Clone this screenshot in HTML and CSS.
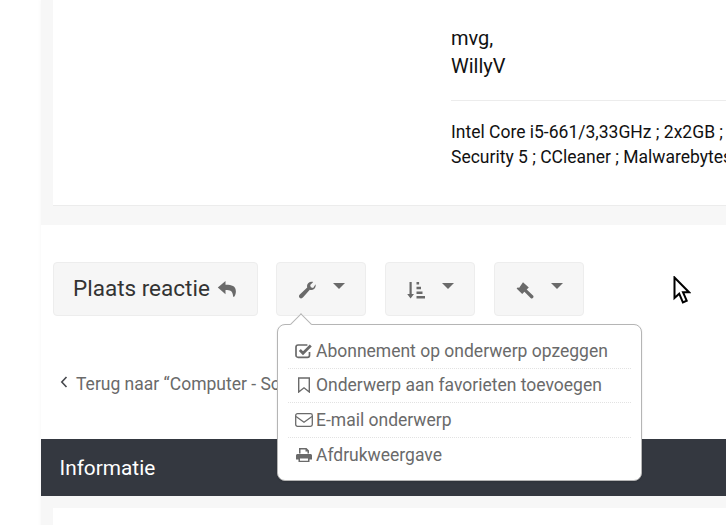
FILE: index.html
```html
<!DOCTYPE html>
<html lang="nl">
<head>
<meta charset="utf-8">
<title>Onderwerp</title>
<link rel="stylesheet" href="styles.css">
</head>
<body>
<div class="wrap">
  <div class="post-area">
    <article class="post">
      <div class="post-side"></div>
      <div class="post-body">
        <p class="closing">mvg,<br>WillyV</p>
        <div class="signature">Intel Core i5-661/3,33GHz ; 2x2GB ; Windows 10 Home 64 bit ; Kaspersky Internet<br>Security 5 ; CCleaner ; Malwarebytes Anti-Malware ; Firefox</div>
      </div>
    </article>
  </div>
  <section class="actions">
    <div class="toolbar">
      <a class="btn btn-reply">Plaats reactie
        <svg class="reply-icon" viewBox="0 0 20 18" width="20" height="18"><path fill="#6a6a6a" d="M8.500 1 .8 7.600l7.700 6.600V10c4.600 0 7.200.8 7.600 6.200.1.600.4.8.8.8.8-.9 2-3 2-5.600C18.900 5.600 14 4.700 8.500 4.800z"/></svg>
      </a>
      <a class="btn btn-tool">
        <svg class="tool-icon" viewBox="0 0 18 18" width="18" height="18"><path fill="#6a6a6a" d="M17.600 3.200c.3 2-.2 3.700-1.500 4.800-1.300 1.100-2.900 1.300-4.300.8L4.900 16.600c-.9 1-2.400 1.100-3.300.2-.9-.9-.8-2.300.2-3.200l7.400-7.100C8.800 5 9.100 3.300 10.400 2.100 11.700.9 13.500.6 15.200 1.100l-3 2.900.6 2.300 2.300.6z"/></svg>
        <span class="caret"></span>
      </a>
      <a class="btn btn-tool">
        <svg class="tool-icon" viewBox="0 0 18 18" width="18" height="18"><path fill="#6a6a6a" d="M2.500 1h2.200v12h2.300L3.600 17.500.2 13h2.300zM9.500 1h2.600v2.400H9.500zM9.500 5.800h4.500v2.400H9.500zM9.500 10.500h6V12.900h-6zM9.500 15h8.500v2.500H9.500z"/></svg>
        <span class="caret"></span>
      </a>
      <a class="btn btn-tool">
        <svg class="tool-icon" viewBox="0 0 18 18" width="18" height="18"><path fill="#6a6a6a" d="M7 1.200 12.800 6.400 10.700 8.600l6.300 6c.7.700.7 1.700 0 2.400-.7.700-1.700.6-2.400-.1L8.400 10.700 6.200 13 .6 7.500 2 6.200l1 .8z"/></svg>
        <span class="caret"></span>
      </a>
    </div>
    <div class="back-row">
      <svg class="back-icon" viewBox="0 0 8 12" width="8" height="12"><path fill="none" stroke="#47494e" stroke-width="1.600" d="M6.500 1 1.800 6l4.700 5"/></svg>
      <a class="back-link">Terug naar “Computer - Software”</a>
    </div>
  </section>
  <section class="info">
    <h3 class="info-title">Informatie</h3>
    <div class="info-gutter"><div class="info-card"></div></div>
  </section>
</div>

<div class="menu">
  <span class="menu-arrow"></span>
  <ul class="menu-list">
    <li class="menu-item">
      <svg class="menu-icon" viewBox="0 0 18 16" width="18" height="16"><path fill="none" stroke="#6a6a6a" stroke-width="1.700" d="M14.500 9v3.200c0 1.300-.9 2.100-2.100 2.100H3.100C1.900 14.300 1 13.500 1 12.200V4.100C1 2.900 1.900 2 3.100 2h9.300"/><path fill="none" stroke="#6a6a6a" stroke-width="2.800" d="M4.800 7 8 10.200 15.800 2.600"/></svg>
      Abonnement op onderwerp opzeggen
    </li>
    <li class="menu-item">
      <svg class="menu-icon" viewBox="0 0 18 16" width="18" height="16"><path fill="none" stroke="#6a6a6a" stroke-width="1.400" d="M3.700 1h10.600v14L9 10.800 3.700 15z"/></svg>
      Onderwerp aan favorieten toevoegen
    </li>
    <li class="menu-item">
      <svg class="menu-icon" viewBox="0 0 18 16" width="18" height="16"><rect x=".7" y="1.700" width="16.600" height="12.600" rx="1.800" fill="none" stroke="#6a6a6a" stroke-width="1.300"/><path fill="none" stroke="#6a6a6a" stroke-width="1.300" d="M1 4.500 9 10.300 17 4.500"/></svg>
      E-mail onderwerp
    </li>
    <li class="menu-item">
      <svg class="menu-icon" viewBox="0 0 18 16" width="18" height="16"><path fill="#6a6a6a" d="M4 1h7.500L14 3.500V6.500h-1.500V4.500H10.500V2.500H5.500v4H4zM2.500 7h13c.8 0 1.500.7 1.500 1.500v4h-2.500v2.500h-11v-2.500H1v-4C1 7.700 1.700 7 2.500 7zM5 11.500v2.300h8V11.500z"/></svg>
      Afdrukweergave
    </li>
  </ul>
</div>

<svg class="cursor" viewBox="0 0 18 30" width="18" height="30"><path fill="#fff" stroke="#000" stroke-width="2" d="M1.500 1.500V22l4.700-4.300 3.700 8.700 3.800-1.700-3.700-8.500h6z"/></svg>
</body>
</html>
```
FILE: styles.css
```css
* { box-sizing: border-box; }
html, body { margin: 0; height: 525px; overflow: hidden; background: #fff; }
body { font-family: Roboto, "Liberation Sans", sans-serif; padding-left: 41px; }
.wrap { width: 1200px; box-shadow: 0 0 5px rgba(0,0,0,.04); }
.post-area { background: #f7f7f7; padding: 0 0 19px 12px; }
.post { display: flex; background: #fff; height: 206px; border-bottom: 1px solid #ececec; }
.post-side { width: 398px; flex: none; }
.post-body { flex: 1; padding-top: 24px; }
.closing { margin: 0; font-size: 20px; line-height: 28px; color: #111; }
.signature { margin-top: 20px; border-top: 1px solid #ececec; padding-top: 19px; font-size: 17.500px; line-height: 25px; color: #111; white-space: nowrap; }
.actions { background: #fff; height: 214px; padding: 37px 12px 0; }
.toolbar { display: flex; gap: 18px; height: 54px; }
.btn { display: flex; align-items: center; height: 54px; background: #f6f6f6; border: 1px solid #ededed; border-radius: 4px; }
.btn-reply { flex: none; padding: 0 0 2px 19px; gap: 7px; width: 205px; font-size: 22.500px; color: #333; white-space: nowrap; }
.btn-tool { width: 90px; margin-right: 1px; padding: 0 0 0 21px; }
.tool-icon { display: block; margin-top: 2px; }
.reply-icon { margin-top: 2px; }
.caret { margin: -7px 0 0 17px; width: 0; height: 0; border-left: 6.500px solid transparent; border-right: 6.500px solid transparent; border-top: 6.500px solid #6a6a6a; }
.back-row { display: flex; align-items: center; gap: 8px; margin-top: 56px; padding-left: 7px; height: 24px; }
.back-icon { margin-top: -4px; }
.back-link { font-size: 17.500px; color: #6a6a6a; white-space: nowrap; }
.info { background: #f7f7f7; }
.info-title { margin: 0; height: 57px; background: #343840; color: #fff; font-size: 20.800px; font-weight: 400; line-height: 58px; padding-left: 18.500px; }
.info-gutter { padding: 12px 0 0 12px; }
.info-card { height: 60px; background: #fff; }
.menu { position: absolute; left: 277px; top: 324px; width: 365px; height: 157px; background: #fff; border: 1px solid #b5b5b5; border-radius: 8px; padding: 9px 10px; box-shadow: 0 1px 2px rgba(0,0,0,.12); }
.menu-arrow { position: absolute; left: 15px; top: -9px; width: 16px; height: 16px; background: #fff; border-left: 1px solid #b5b5b5; border-top: 1px solid #b5b5b5; transform: rotate(45deg) scale(.95); }
.menu-list { list-style: none; margin: 0; padding: 0; position: relative; }
.menu-item { display: flex; align-items: center; gap: 3px; height: 34.500px; padding-left: 7px; font-size: 17.500px; color: #6a6a6a; white-space: nowrap; border-bottom: 1px dotted #e2e2e2; }
.menu-item:last-child { border-bottom: 0; }
.menu-icon { flex: none; }
.cursor { position: absolute; left: 673px; top: 276px; }
```
